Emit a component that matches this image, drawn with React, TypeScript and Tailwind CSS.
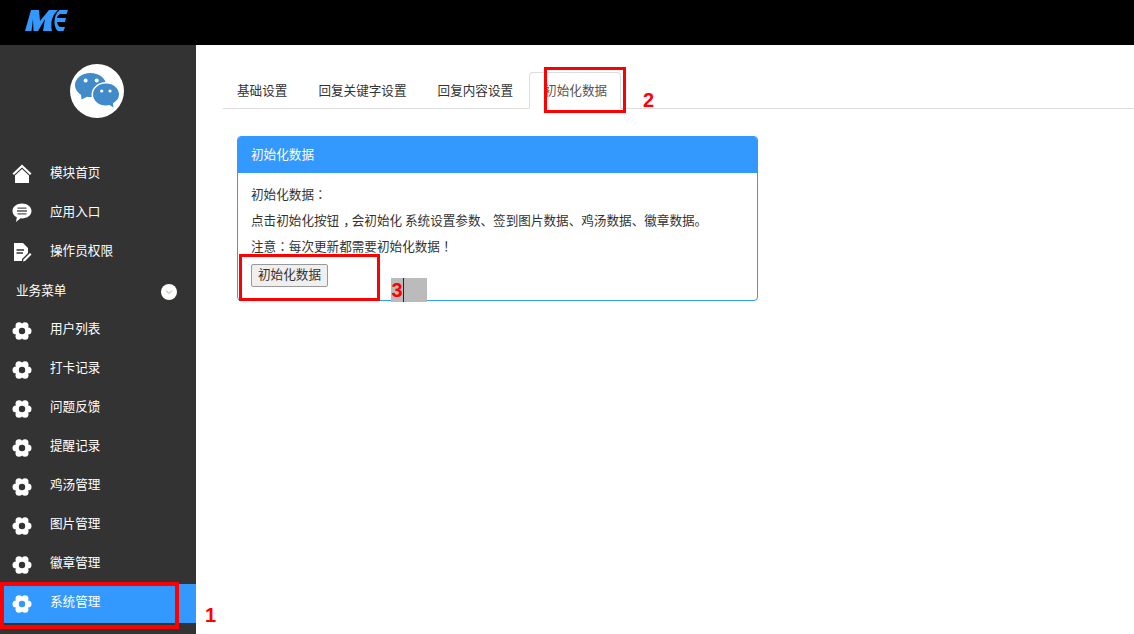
const font = "font-['Microsoft_YaHei','Noto_Sans_CJK_SC','Liberation_Sans',sans-serif]";

function Home() {
  return (
    <svg width="20" height="20" viewBox="0 0 20 20" fill="#fff" className="-mt-[2px]">
      <path d="M10 0.500 L19.500 9.500 L18 11 L10 3.500 L2 11 L0.500 9.500 Z" />
      <path d="M10 5 L17 11.500 V19 H3 V11.500 Z" />
    </svg>
  );
}

function Bubble() {
  return (
    <svg width="20" height="20" viewBox="0 0 20 20" className="-mt-[2px]">
      <path fill="#fff" d="M10 0.500C4.700 0.500 0.500 3.900 0.500 8c0 2.700 1.700 5 4.300 6.300L4 19l4.600-3.700c.5.100.9.100 1.400.100 5.300 0 9.500-3.300 9.500-7.400S15.300 0.500 10 0.500Z" />
      <path stroke="#555" strokeWidth="1.300" d="M5.500 5.200H14.500M5 8H15M5.500 10.800H14.500" />
    </svg>
  );
}

function Doc() {
  return (
    <svg width="20" height="20" viewBox="0 0 20 20" className="-mt-[2px]">
      <path fill="#fff" d="M2 1H11L16 6V11L10 17V19H2Z" />
      <path stroke="#333" strokeWidth="1.300" d="M4.500 8H12M4.500 11H11" />
      <path fill="#fff" d="M11.500 17.500L18 11L19.500 12.500L13 19L11 19.500Z" />
    </svg>
  );
}

function Gear({ hole }: { hole: string }) {
  const lobes = [
    [16, 10],
    [13, 4.800],
    [7, 4.800],
    [4, 10],
    [7, 15.200],
    [13, 15.200],
  ];
  return (
    <svg width="20" height="20" viewBox="0 0 20 20">
      {lobes.map(([x, y]) => (
        <circle key={`${x}-${y}`} cx={x} cy={y} r="3.500" fill="#fff" />
      ))}
      <circle cx="10" cy="10" r="6" fill="#fff" />
      <circle cx="10" cy="10" r="3.200" fill={hole} />
    </svg>
  );
}

const items = ["用户列表", "打卡记录", "问题反馈", "提醒记录", "鸡汤管理", "图片管理", "徽章管理"];

function Row({ label, icon, active }: { label: string; icon: React.ReactNode; active?: boolean }) {
  return (
    <div className={`flex h-[39px] items-center pl-[12px] text-[12.6px] text-white ${active ? "bg-[#3399ff]" : ""}`}>
      <span className="flex w-[38px] shrink-0">{icon}</span>
      <span className="pb-1">{label}</span>
    </div>
  );
}

const tabs = ["基础设置", "回复关键字设置", "回复内容设置"];

function P({ children }: { children: string }) {
  return <span className="font-['Noto_Sans_CJK_TC']">{children}</span>;
}

export default function App() {
  return (
    <div className={`relative flex h-[634px] w-[1134px] flex-col overflow-hidden bg-white ${font}`}>
      <header className="flex h-[45px] shrink-0 bg-black pb-[14px] pl-[25px] pt-[10px]">
        <svg width="43" height="21" viewBox="0 0 43 21" fill="#3399ff">
          <path d="M0 21 L6 0 H14 L15 11 L24 0 H33 C27 5 25 13 27 21 H18 L20 9 L13 21 H8.500 L8 9 L6.500 21 Z" />
          <path d="M34.500 0 H43 L41.500 4 H35.500 C33.500 4.500 32.500 6 32 8 H41 L40 12 H32 C32.500 15 34 17 36 17 H40 L38.500 21 H33 C28.500 18 27.500 6 34.500 0 Z" />
        </svg>
      </header>
      <div className="flex min-h-0 flex-1">
        <aside className="w-[196px] shrink-0 bg-[#333333]">
          <div className="flex h-[110px] justify-center pr-[2px] pt-[19px]">
            <div className="flex h-[54px] w-[54px] items-center justify-center rounded-full bg-white">
              <svg width="44" height="38" viewBox="0 0 44 38" className="shrink-0">
                <path fill="#428bca" d="M15.500 1C7 1 0 6.500 0 13c0 4 2.500 7.500 6 9.800L6.500 27.500 12 24.800c1.100.2 2.300.3 3.500.3C24 25.100 31 19.600 31 13S24 1 15.500 1Z" />
                <ellipse cx="31" cy="22.500" rx="14.500" ry="12.500" fill="#fff" />
                <path fill="#428bca" d="M31 11.500c-7.200 0-13 4.900-13 11s5.800 11 13 11c1.200 0 2.400-.1 3.500-.4l4 2.400-.6-4.200c3.700-2 6.100-5 6.100-8.800 0-6.100-5.800-11-13-11Z" />
                <circle cx="10.600" cy="8.600" r="2" fill="#fff" />
                <circle cx="21.700" cy="8.600" r="2" fill="#fff" />
                <circle cx="26.700" cy="19" r="1.600" fill="#fff" />
                <circle cx="35" cy="19" r="1.600" fill="#fff" />
              </svg>
            </div>
          </div>
          <Row label="模块首页" icon={<Home />} />
          <Row label="应用入口" icon={<Bubble />} />
          <Row label="操作员权限" icon={<Doc />} />
          <div className="flex h-[39px] items-center justify-between pl-4 pr-[19px] text-[12.6px] text-white">
            <span className="pb-[2px]">业务菜单</span>
            <span className="flex h-4 w-4 items-center justify-center rounded-full bg-white">
              <svg width="8" height="8" viewBox="0 0 8 8" fill="none" stroke="#b8a080" strokeWidth="1">
                <path d="M1 2.500L4 5.500L7 2.500" />
              </svg>
            </span>
          </div>
          {items.map((label) => (
            <Row key={label} label={label} icon={<Gear hole="#333333" />} />
          ))}
          <Row label="系统管理" icon={<Gear hole="#3399ff" />} active />
        </aside>
        <main className="min-w-0 flex-1 pl-[27px] pt-[27px] text-[12.6px] text-[#333333]">
          <nav className="flex h-[37px] items-stretch border-b border-[#dddddd]">
            {tabs.map((t) => (
              <span key={t} className="flex items-center pl-[14px] pr-[17px]">
                {t}
              </span>
            ))}
            <span className="relative -mb-px -ml-px flex w-[92px] items-center rounded-t border border-[#dddddd] border-b-white bg-white pl-[14px] text-[#555555]">
              初始化数据
            </span>
          </nav>
          <section className="ml-[14px] mt-[27px] h-[165px] w-[521px] overflow-hidden rounded border border-[#3399ff]">
            <div className="flex h-[36px] items-center bg-[#3399ff] pb-[2px] pl-[13px] text-white">初始化数据</div>
            <div className="px-[13px] pt-[8px]">
              <p className="leading-[26px]">初始化数据<P>：</P></p>
              <p className="leading-[26px]">点击初始化按钮<span className="pl-[4px] pr-[2.3px] font-['Noto_Sans_CJK_SC'] [font-feature-settings:'halt']">，</span>会初始化 系统设置参数、签到图片数据、鸡汤数据、徽章数据。</p>
              <p className="leading-[26px]">注意<P>：</P>每次更新都需要初始化数据<P>！</P></p>
              <button className="mt-[5px] flex h-[23px] w-[77px] items-center justify-center rounded-[2px] border border-[#999999] bg-[#efefef] pb-[2px] text-[12.6px] text-[#333333]">
                初始化数据
              </button>
            </div>
          </section>
        </main>
      </div>

      {/* screenshot annotations */}
      <div className="absolute left-0 top-[582px] h-[47px] w-[179px] border-[4px] border-[#ff0000]" />
      <div className="absolute left-[544px] top-[67px] h-[46px] w-[82px] border-[3px] border-[#ff0000]" />
      <div className="absolute left-[239px] top-[254px] h-[47px] w-[141px] border-[3px] border-[#ff0000]" />
      <div className="absolute left-[391px] top-[278px] flex h-[24px] w-[36px] bg-[#bbbbbb]">
        <span className="w-[13px] border-r border-[#222222] text-center font-['Liberation_Sans'] text-[20px] font-bold leading-[24px] text-[#ff0000]">3</span>
      </div>
      <span className="absolute left-[205px] top-[604px] font-['Liberation_Sans'] text-[20px] font-bold leading-[22px] text-[#ff0000]">1</span>
      <span className="absolute left-[643px] top-[89px] font-['Liberation_Sans'] text-[20px] font-bold leading-[22px] text-[#ff0000]">2</span>
    </div>
  );
}
